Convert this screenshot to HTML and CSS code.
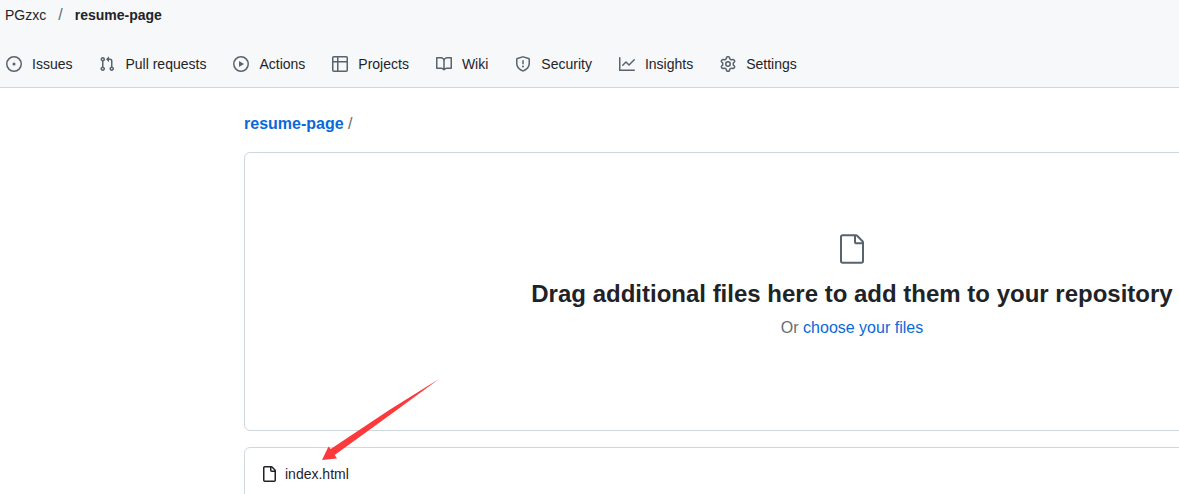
FILE: index.html
```html
<!DOCTYPE html>
<html lang="en">
<head>
<meta charset="utf-8">
<title>resume-page - Upload files</title>
<link rel="stylesheet" href="styles.css">
</head>
<body>
<header class="header">
  <nav class="crumbs" aria-label="Breadcrumb">
    <a href="#owner">PGzxc</a><span class="slash">/</span><a class="current" href="#repo">resume-page</a>
  </nav>
  <nav class="tabs" aria-label="Repository">
    <a href="#issues"><svg class="icon" viewBox="0 0 16 16"><path d="M8 9.5a1.5 1.5 0 1 0 0-3 1.5 1.5 0 0 0 0 3Z"/><path d="M8 0a8 8 0 1 1 0 16A8 8 0 0 1 8 0ZM1.5 8a6.5 6.5 0 1 0 13 0 6.5 6.5 0 0 0-13 0Z"/></svg>Issues</a>
    <a href="#pulls"><svg class="icon" viewBox="0 0 16 16"><path d="M1.5 3.25a2.25 2.25 0 1 1 3 2.122v5.256a2.251 2.251 0 1 1-1.5 0V5.372A2.25 2.25 0 0 1 1.5 3.25Zm5.677-.177L9.573.677A.25.25 0 0 1 10 .854V2.5h1A2.5 2.5 0 0 1 13.5 5v5.628a2.251 2.251 0 1 1-1.5 0V5a1 1 0 0 0-1-1h-1v1.646a.25.25 0 0 1-.427.177L7.177 3.427a.25.25 0 0 1 0-.354ZM3.75 2.5a.75.75 0 1 0 0 1.5.75.75 0 0 0 0-1.5Zm0 9.5a.75.75 0 1 0 0 1.5.75.75 0 0 0 0-1.5Zm8.25.75a.75.75 0 1 0 1.5 0 .75.75 0 0 0-1.5 0Z"/></svg>Pull requests</a>
    <a href="#actions"><svg class="icon" viewBox="0 0 16 16"><path d="M8 0a8 8 0 1 1 0 16A8 8 0 0 1 8 0ZM1.5 8a6.5 6.5 0 1 0 13 0 6.5 6.5 0 0 0-13 0Zm4.879-2.773 4.264 2.559a.25.25 0 0 1 0 .428l-4.264 2.559A.25.25 0 0 1 6 10.559V5.442a.25.25 0 0 1 .379-.215Z"/></svg>Actions</a>
    <a href="#projects"><svg class="icon" viewBox="0 0 16 16"><path d="M0 1.75C0 .784.784 0 1.75 0h12.5C15.216 0 16 .784 16 1.75v12.5A1.75 1.75 0 0 1 14.25 16H1.75A1.75 1.75 0 0 1 0 14.25ZM6.5 6.5v8h7.75a.25.25 0 0 0 .25-.25V6.5Zm8-1.5V1.75a.25.25 0 0 0-.25-.25H6.5V5Zm-13 1.5v7.75c0 .138.112.25.25.25H5v-8ZM5 5V1.5H1.75a.25.25 0 0 0-.25.25V5Z"/></svg>Projects</a>
    <a href="#wiki"><svg class="icon" viewBox="0 0 16 16"><path d="M0 1.75A.75.75 0 0 1 .75 1h4.253c1.227 0 2.317.59 3 1.501A3.743 3.743 0 0 1 11.006 1h4.245a.75.75 0 0 1 .75.75v10.5a.75.75 0 0 1-.75.75h-4.507a2.25 2.25 0 0 0-1.591.659l-.622.621a.75.75 0 0 1-1.06 0l-.622-.621A2.25 2.25 0 0 0 5.258 13H.75a.75.75 0 0 1-.75-.75Zm7.251 10.324.004-5.073-.002-2.253A2.25 2.25 0 0 0 5.003 2.5H1.5v9h3.757a3.75 3.75 0 0 1 1.994.574ZM8.755 4.75l-.004 7.322a3.752 3.752 0 0 1 1.992-.572H14.5v-9h-3.495a2.25 2.25 0 0 0-2.25 2.25Z"/></svg>Wiki</a>
    <a href="#security"><svg class="icon" viewBox="0 0 16 16"><path d="M7.467.133a1.748 1.748 0 0 1 1.066 0l5.25 1.68A1.75 1.75 0 0 1 15 3.48V7c0 1.566-.32 3.182-1.303 4.682-.983 1.498-2.585 2.813-5.032 3.855a1.697 1.697 0 0 1-1.33 0c-2.447-1.042-4.049-2.357-5.032-3.855C1.32 10.182 1 8.566 1 7V3.48a1.755 1.755 0 0 1 1.217-1.667Zm.61 1.429a.25.25 0 0 0-.153 0l-5.25 1.68a.25.25 0 0 0-.174.238V7c0 1.358.275 2.666 1.057 3.86.784 1.194 2.121 2.34 4.366 3.297a.196.196 0 0 0 .154 0c2.245-.956 3.582-2.104 4.366-3.298C13.225 9.666 13.5 8.36 13.5 7V3.48a.251.251 0 0 0-.174-.237l-5.25-1.68ZM8.75 4.75v3a.75.75 0 0 1-1.5 0v-3a.75.75 0 0 1 1.5 0ZM9 10.5a1 1 0 1 1-2 0 1 1 0 0 1 2 0Z"/></svg>Security</a>
    <a href="#insights"><svg class="icon" viewBox="0 0 16 16"><path d="M1.5 1.75V13.5h13.75a.75.75 0 0 1 0 1.5H.75a.75.75 0 0 1-.75-.75V1.75a.75.75 0 0 1 1.5 0Zm14.28 2.53-5.25 5.25a.75.75 0 0 1-1.06 0L7 7.06 4.28 9.78a.751.751 0 0 1-1.06-1.06l3.25-3.25a.75.75 0 0 1 1.06 0L10 7.94l4.72-4.72a.751.751 0 0 1 1.06 1.06Z"/></svg>Insights</a>
    <a href="#settings"><svg class="icon" viewBox="0 0 16 16"><path d="M8 0a8.2 8.2 0 0 1 .701.031C9.444.095 9.99.645 10.16 1.29l.288 1.107c.018.066.079.158.212.224.231.114.454.243.668.386.123.082.233.09.299.071l1.103-.303c.644-.176 1.392.021 1.82.63.27.385.506.792.704 1.218.315.675.111 1.422-.364 1.891l-.814.806c-.049.048-.098.147-.088.294.016.257.016.515 0 .772-.01.147.038.246.088.294l.814.806c.475.469.679 1.216.364 1.891a7.977 7.977 0 0 1-.704 1.217c-.428.61-1.176.807-1.82.63l-1.102-.302c-.067-.019-.177-.011-.3.071a5.909 5.909 0 0 1-.668.386c-.133.066-.194.158-.211.224l-.29 1.106c-.168.646-.715 1.196-1.458 1.26a8.006 8.006 0 0 1-1.402 0c-.743-.064-1.289-.614-1.458-1.26l-.289-1.106c-.018-.066-.079-.158-.212-.224a5.738 5.738 0 0 1-.668-.386c-.123-.082-.233-.09-.299-.071l-1.103.303c-.644.176-1.392-.021-1.82-.63a8.12 8.12 0 0 1-.704-1.218c-.315-.675-.111-1.422.363-1.891l.815-.806c.05-.048.098-.147.088-.294a6.214 6.214 0 0 1 0-.772c.01-.147-.038-.246-.088-.294l-.815-.806C.635 6.045.431 5.298.746 4.623a7.92 7.92 0 0 1 .704-1.217c.428-.61 1.176-.807 1.82-.63l1.102.302c.067.019.177.011.3-.071.214-.143.437-.272.668-.386.133-.066.194-.158.211-.224l.29-1.106C6.009.645 6.556.095 7.299.03 7.53.01 7.764 0 8 0Zm-.571 1.525c-.036.003-.108.036-.137.146l-.289 1.105c-.147.561-.549.967-.998 1.189-.173.086-.34.183-.5.29-.417.278-.97.423-1.529.27l-1.103-.303c-.109-.03-.175.016-.195.045-.22.312-.412.644-.573.99-.014.031-.021.11.059.19l.815.806c.411.406.562.957.53 1.456a4.709 4.709 0 0 0 0 .582c.032.499-.119 1.05-.53 1.456l-.815.806c-.081.08-.073.159-.059.19.162.346.353.677.573.989.02.03.085.076.195.046l1.102-.303c.56-.153 1.113-.008 1.53.27.161.107.328.204.501.29.447.222.85.629.997 1.189l.289 1.105c.029.109.101.143.137.146a6.6 6.6 0 0 0 1.142 0c.036-.003.108-.036.137-.146l.289-1.105c.147-.561.549-.967.998-1.189.173-.086.34-.183.5-.29.417-.278.97-.423 1.529-.27l1.103.303c.109.029.175-.016.195-.045.22-.313.411-.644.573-.99.014-.031.021-.11-.059-.19l-.815-.806c-.411-.406-.562-.957-.53-1.456a4.709 4.709 0 0 0 0-.582c-.032-.499.119-1.05.53-1.456l.815-.806c.081-.08.073-.159.059-.19a6.464 6.464 0 0 0-.573-.989c-.02-.03-.085-.076-.195-.046l-1.102.303c-.56.153-1.113.008-1.53-.27a4.44 4.44 0 0 0-.501-.29c-.447-.222-.85-.629-.997-1.189l-.289-1.105c-.029-.11-.101-.143-.137-.146a6.6 6.6 0 0 0-1.142 0ZM11 8a3 3 0 1 1-6 0 3 3 0 0 1 6 0ZM9.5 8a1.5 1.5 0 1 0-3.001.001A1.5 1.5 0 0 0 9.5 8Z"/></svg>Settings</a>
  </nav>
</header>
<main class="main">
  <p class="path"><a class="repo" href="#repo">resume-page</a> /</p>
  <section class="dropzone">
    <svg class="file-large" viewBox="0 0 24 24"><path d="M3 3a2 2 0 0 1 2-2h9.982a2 2 0 0 1 1.414.586l4.018 4.018A2 2 0 0 1 21 7.018V21a2 2 0 0 1-2 2H5a2 2 0 0 1-2-2Zm2-.5a.5.5 0 0 0-.5.5v18a.5.5 0 0 0 .5.5h14a.5.5 0 0 0 .5-.5V8.5h-4a2 2 0 0 1-2-2v-4Zm10 0v4a.5.5 0 0 0 .5.5h4a.5.5 0 0 0-.146-.336l-4.018-4.018A.5.5 0 0 0 15 2.5Z"/></svg>
    <h1 class="title">Drag additional files here to add them to your repository</h1>
    <p class="hint">Or <a href="#choose">choose your files</a></p>
  </section>
  <ul class="files">
    <li class="file"><svg class="icon" viewBox="0 0 16 16"><path d="M2 1.75C2 .784 2.784 0 3.75 0h6.586c.464 0 .909.184 1.237.513l2.914 2.914c.329.328.513.773.513 1.237v9.586A1.75 1.75 0 0 1 13.25 16h-9.5A1.75 1.75 0 0 1 2 14.25Zm1.75-.25a.25.25 0 0 0-.25.25v12.5c0 .138.112.25.25.25h9.5a.25.25 0 0 0 .25-.25V6h-2.75A1.75 1.75 0 0 1 9 4.25V1.5Zm6.75.062V4.25c0 .138.112.25.25.25h2.688l-.011-.013-2.914-2.914-.013-.011Z"/></svg>index.html</li>
  </ul>
</main>
<svg class="arrow" viewBox="0 0 117 82"><path d="M0 81 6.5 67.5 8.7 70 68 30.5 117 0 70 34.5 12.7 76 15 79.5Z"/></svg>
</body>
</html>
```
FILE: styles.css
```css
* { box-sizing: border-box; }
body {
  margin: 0;
  position: relative;
  min-height: 100vh;
  overflow: hidden;
  background: #fff;
  color: #1f2328;
  font: 14px/20px "Liberation Sans", Arial, sans-serif;
}
a { color: inherit; text-decoration: none; }
svg { display: block; flex: none; fill: currentColor; }
.icon { width: 16px; height: 16px; }
.header {
  background: #f6f8fa;
  border-bottom: 1px solid #d0d7de;
  padding: 5px 5px 13px;
}
.crumbs { display: flex; gap: 12px; }
.slash { color: #656d76; font-size: 16px; }
.current { font-weight: 700; }
.tabs { display: flex; gap: 27px; padding: 29px 0 0 1px; white-space: nowrap; }
.tabs a { display: flex; align-items: center; gap: 10px; }
.tabs .icon { color: #59636e; }
.main { padding-left: 244px; margin-right: -281px; }
.path {
  margin: 0;
  padding: 24px 0 16px;
  font-size: 16px;
  line-height: 24px;
  color: #656d76;
}
.repo { font-weight: 700; color: #0969da; }
.dropzone {
  display: flex;
  flex-direction: column;
  align-items: center;
  padding: 80px 32px;
  border: 1px solid #d0d7de;
  border-radius: 6px;
  text-align: center;
}
.file-large { width: 32px; height: 32px; color: #59636e; }
.title { margin: 11px 0 0; font-size: 24px; line-height: 36px; }
.hint { margin: 4px 0 0; padding-bottom: 10px; font-size: 16px; line-height: 24px; color: #656d76; }
.hint a { color: #0969da; }
.files {
  list-style: none;
  margin: 16px 0 0;
  padding: 16px;
  border: 1px solid #d0d7de;
  border-radius: 6px;
}
.file { display: flex; align-items: center; gap: 8px; }
.arrow { position: absolute; left: 322px; top: 379px; width: 117px; height: 82px; color: #fc3a3c; }
```
